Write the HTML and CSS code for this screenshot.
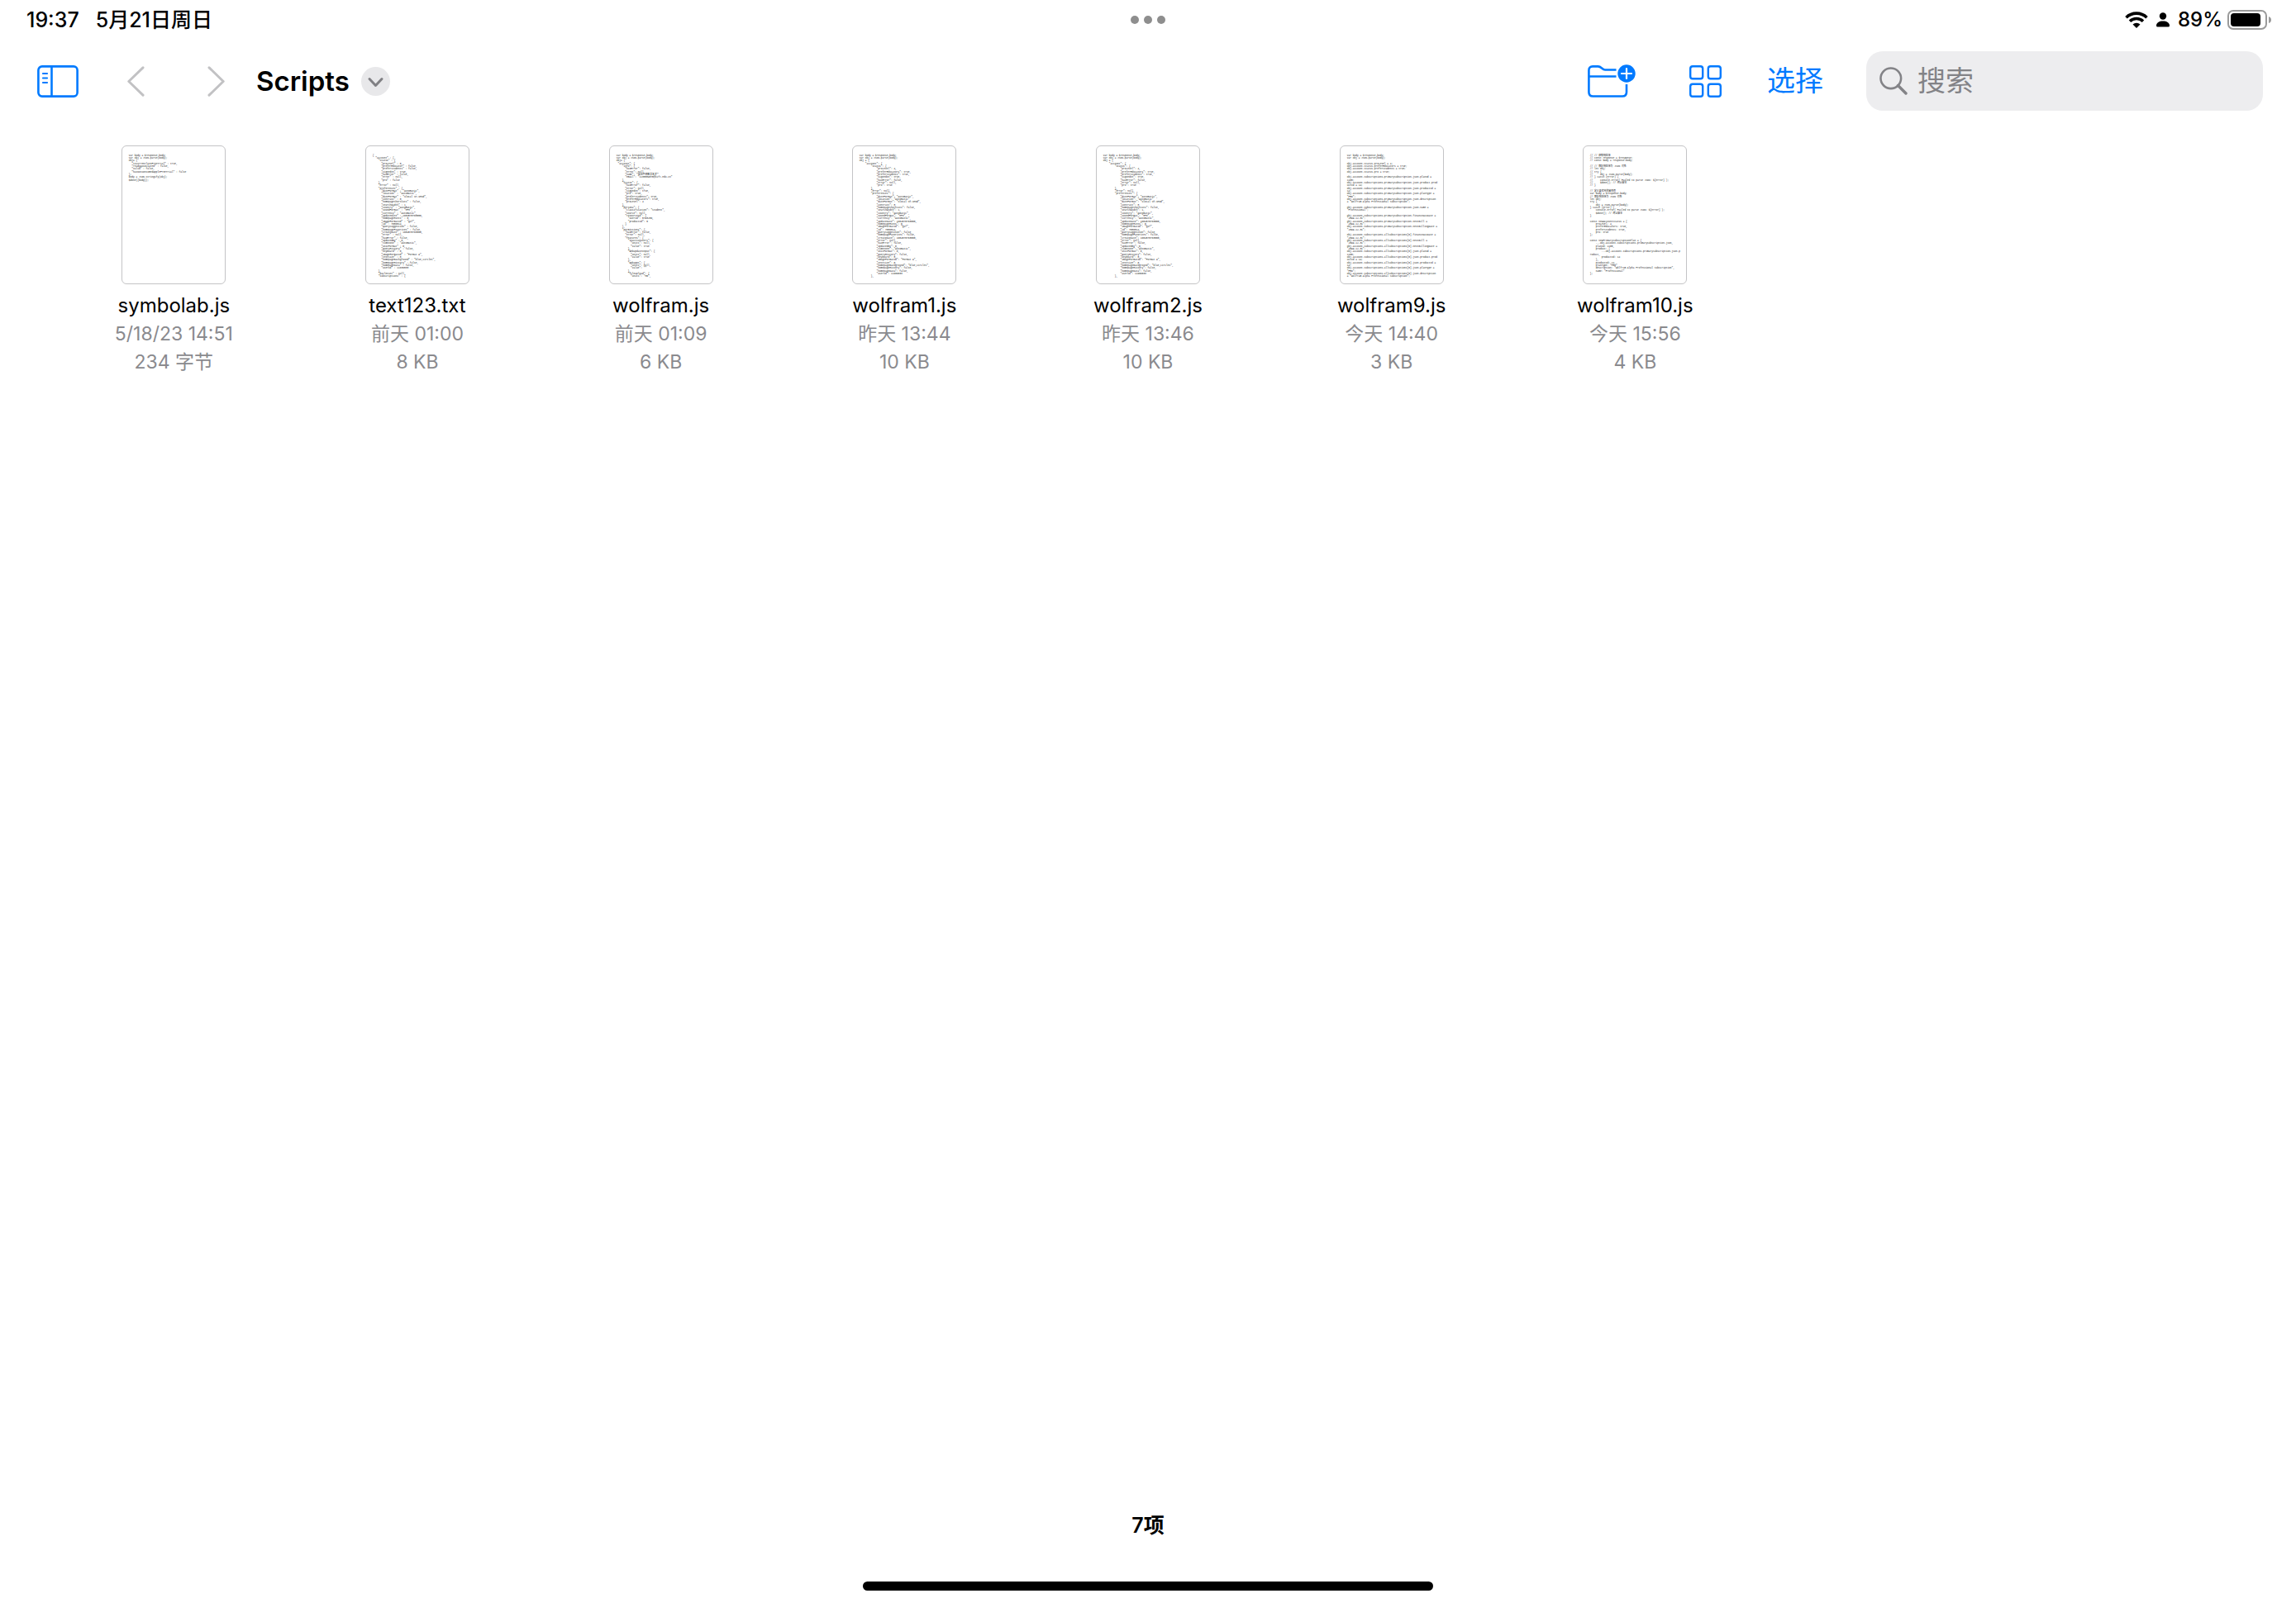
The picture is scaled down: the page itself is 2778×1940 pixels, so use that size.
FILE: index.html
```html
<!DOCTYPE html>
<html lang="zh-CN">
<head>
<meta charset="utf-8">
<meta name="viewport" content="width=device-width, initial-scale=1">
<title>Scripts</title>
<link rel="stylesheet" href="styles.css">
</head>
<body>
<div class="screen">
  <div class="status">
    <div class="status-side status-start">
      <span>19:37</span>
      <span>5月21日周日</span>
    </div>
    <button class="dots" type="button" aria-label="多任务"><i></i><i></i><i></i></button>
    <div class="status-side status-end">
      <svg class="wifi" viewBox="0 0 28 20" width="28" height="20" aria-hidden="true">
        <path d="M1.500 7.200A18 18 0 0 1 26.500 7.200" fill="none" stroke="#000" stroke-width="3.600"/>
        <path d="M6 11.800A11.500 11.500 0 0 1 22 11.800" fill="none" stroke="#000" stroke-width="3.600"/>
        <path d="M9.500 15.600A6.400 6.400 0 0 1 18.500 15.600L14 20Z"/>
      </svg>
      <svg class="person" viewBox="0 0 16 18" width="16" height="18" aria-hidden="true">
        <circle cx="8" cy="4.500" r="4.200"/>
        <path d="M0 16C0 12.500 3.500 10.500 8 10.500S16 12.500 16 16Q16 17.500 14.500 17.500H1.500Q0 17.500 0 16Z"/>
      </svg>
      <span>89%</span>
      <svg class="battery" viewBox="0 0 54 24" width="54" height="24" aria-hidden="true">
        <rect x="1" y="1" width="46" height="22" rx="6" fill="none" stroke="#9a9a9a" stroke-width="2"/>
        <rect x="4" y="4" width="36" height="16" rx="4"/>
        <path d="M50 8Q53 9 53 12T50 16Z" fill="#9a9a9a"/>
      </svg>
    </div>
  </div>

  <header class="toolbar">
    <button class="icon sidebar" type="button" aria-label="边栏">
      <svg viewBox="0 0 50 39" width="50" height="39">
        <rect x="1.400" y="1.400" width="47.200" height="36.200" rx="4.500"/>
        <path d="M17.500 1.400V37.600"/>
        <path d="M7 10H12M7 15.500H12M7 21H12" stroke-width="2.200" stroke-linecap="round"/>
      </svg>
    </button>
    <button class="icon back" type="button" aria-label="返回">
      <svg viewBox="0 0 21 37" width="21" height="37"><path d="M19 1.800L1.800 18.500L19 35.200"/></svg>
    </button>
    <button class="icon forward" type="button" aria-label="前进">
      <svg viewBox="0 0 21 37" width="21" height="37"><path d="M2 1.800L19.200 18.500L2 35.200"/></svg>
    </button>
    <h1 class="title">Scripts</h1>
    <button class="icon title-menu" type="button" aria-label="文件夹菜单">
      <svg viewBox="0 0 35 35" width="35" height="35"><path d="M10 14.500L17.500 22.500L25 14.500"/></svg>
    </button>
    <div class="actions">
      <button class="icon folder" type="button" aria-label="新建文件夹">
        <svg viewBox="0 0 58 40" width="58" height="40">
          <path d="M34.500 6.500H21C17.500 6.500 16.500 2.400 12.500 2.400H6Q1.400 2.400 1.400 7V33.500Q1.400 38.500 6.400 38.500H42Q47 38.500 47 33.500V24"/>
          <path d="M1.400 14.500H34.500"/>
          <circle cx="47" cy="11" r="10.700" fill="#007aff" stroke="none"/>
          <path d="M47 5V17M41 11H53" stroke="#fff" stroke-width="2.200" stroke-linecap="round"/>
        </svg>
      </button>
      <button class="icon grid-view" type="button" aria-label="显示方式">
        <svg viewBox="0 0 39 39" width="39" height="39">
          <rect x="1.200" y="1.200" width="15" height="15" rx="2.800"/>
          <rect x="22.800" y="1.200" width="15" height="15" rx="2.800"/>
          <rect x="1.200" y="22.800" width="15" height="15" rx="2.800"/>
          <rect x="22.800" y="22.800" width="15" height="15" rx="2.800"/>
        </svg>
      </button>
      <button class="select" type="button">选择</button>
      <label class="search">
        <svg viewBox="0 0 34 34" width="34" height="34" aria-hidden="true">
          <circle cx="13.800" cy="13.800" r="12.300"/>
          <path d="M22.500 22.500L32 32" stroke-width="3.400" stroke-linecap="round"/>
        </svg>
        <input type="search" placeholder="搜索" aria-label="搜索">
      </label>
    </div>
  </header>

  <main class="files">
    <a class="file" href="#symbolab.js">
      <svg class="thumb" viewBox="0 0 1116 1494" aria-hidden="true"><foreignObject width="1116" height="1494"><pre class="page">var body = $response.body;
var obj = JSON.parse(body);
obj= {
  "isCurrentlyInFreeTrial" : true,
  "readyAssociated" : false,
  "valid" : false,
  "hasNotConsumedAppleFreeTrial" : false
};
body = JSON.stringify(obj);
$done({body});</pre></foreignObject></svg>
      <span class="name">symbolab.js</span>
      <span class="meta">5/18/23 14:51</span>
      <span class="meta">234 字节</span>
    </a>
    <a class="file" href="#text123.txt">
      <svg class="thumb" viewBox="0 0 1116 1494" aria-hidden="true"><foreignObject width="1116" height="1494"><pre class="page">{
  "account" : {
    "status" : {
      "proLevel" : 0,
      "preferEducator" : false,
      "preferStudents" : false,
      "signedIn" : true,
      "hasError" : false,
      "error" : null,
      "pro" : false
    },
    "error" : null,
    "preferences" : {
      "dateFormat" : "Automatic",
      "location" : "Automatic",
      "dateFormat" : "%local %Y-%M%d",
      "contrast" : 0,
      "homepageShortcuts" : false,
      "searchWidth" : 1,
      "country" : "Automatic",
      "soundFormat" : "MP3",
      "currency" : "Automatic",
      "updateDate" : 1684570763000,
      "homepageHints" : 0,
      "imageFormatId" : "gif",
      "id" : 7086514,
      "querySuggestion" : false,
      "homepageFavorites" : false,
      "createDate" : 1684570763000,
      "error" : null,
      "hasError" : false,
      "updatedBy" : 0,
      "timezone" : "Automatic",
      "unitFormat" : 0,
      "queryHistory" : false,
      "keyboard" : 0,
      "imageFormatId" : "Format A",
      "textSize" : 0,
      "homepageBackground" : "blue,circles",
      "homepageHistory" : false,
      "homepageData" : false,
      "userId" : 11636533
    },
    "pacletSet" : null,
    "subscriptions" : {</pre></foreignObject></svg>
      <span class="name">text123.txt</span>
      <span class="meta">前天 01:00</span>
      <span class="meta">8 KB</span>
    </a>
    <a class="file" href="#wolfram.js">
      <svg class="thumb" viewBox="0 0 1116 1494" aria-hidden="true"><foreignObject width="1116" height="1494"><pre class="page">var body = $response.body;
var obj = JSON.parse(body);
obj= {
 "account": {
    "info": {
      "hasError": false,
      "error": null,
      "name": "英国牛顿数学艺术",
      "email": "1138889878@kirt.edu.cn"
    },
    "status": {
      "hasError": false,
      "error": null,
      "signedIn": true,
      "pro": true,
      "preferStudents": true,
      "preferEducators": true,
      "proLevel": 4
    },
    "persona": {
      "classification": "Student",
      "source": null,
      "resourceId": {
        "userId": 5793256,
        "productId": 5
      }
    },
    "permissions": {
      "hasError": false,
      "error": null,
      "features": {
        "InactiveUsers": {
          "units": null,
          "value": true
        },
        "WebUpdateInput": {
          "units": null,
          "value": true
        },
        "webapps": {
          "units": null,
          "value": ""
        },
        "fileUpload": {
          "units": "MB",</pre></foreignObject></svg>
      <span class="name">wolfram.js</span>
      <span class="meta">前天 01:09</span>
      <span class="meta">6 KB</span>
    </a>
    <a class="file" href="#wolfram1.js">
      <svg class="thumb" viewBox="0 0 1116 1494" aria-hidden="true"><foreignObject width="1116" height="1494"><pre class="page">var body = $response.body;
var obj = JSON.parse(body);
obj = {
    "account": {
        "status": {
            "proLevel": 4,
            "preferEducators": true,
            "preferStudents": true,
            "signedIn": true,
            "hasError": false,
            "error": null,
            "pro": true
        },
        "error": null,
        "preferences": {
            "dateFormat": "Automatic",
            "location": "Automatic",
            "dateFormat": "%local %Y-%M%d",
            "contrast": 0,
            "homepageShortcuts": false,
            "searchWidth": 1,
            "country": "Automatic",
            "soundFormat": "MP3",
            "currency": "Automatic",
            "updateDate": 1684570763000,
            "homepageHints": 0,
            "imageFormatId": "gif",
            "id": 7086514,
            "querySuggestion": false,
            "homepageFavorites": false,
            "createDate": 1684570763000,
            "error": null,
            "hasError": false,
            "updatedBy": 0,
            "timezone": "Automatic",
            "unitFormat": 0,
            "queryHistory": false,
            "keyboard": 0,
            "imageFormatId": "Format A",
            "textSize": 0,
            "homepageBackground": "blue,circles",
            "homepageHistory": false,
            "homepageData": false,
            "userId": 11636533
        },</pre></foreignObject></svg>
      <span class="name">wolfram1.js</span>
      <span class="meta">昨天 13:44</span>
      <span class="meta">10 KB</span>
    </a>
    <a class="file" href="#wolfram2.js">
      <svg class="thumb" viewBox="0 0 1116 1494" aria-hidden="true"><foreignObject width="1116" height="1494"><pre class="page">var body = $response.body;
var obj = JSON.parse(body);
obj = {
    "account": {
        "status": {
            "proLevel": 4,
            "preferEducators": true,
            "preferStudents": true,
            "signedIn": true,
            "hasError": false,
            "error": null,
            "pro": true
        },
        "error": null,
        "preferences": {
            "dateFormat": "Automatic",
            "location": "Automatic",
            "dateFormat": "%local %Y-%M%d",
            "contrast": 0,
            "homepageShortcuts": false,
            "searchWidth": 1,
            "country": "Automatic",
            "soundFormat": "MP3",
            "currency": "Automatic",
            "updateDate": 1684570763000,
            "homepageHints": 0,
            "imageFormatId": "gif",
            "id": 7086514,
            "querySuggestion": false,
            "homepageFavorites": false,
            "createDate": 1684570763000,
            "error": null,
            "hasError": false,
            "updatedBy": 0,
            "timezone": "Automatic",
            "unitFormat": 0,
            "queryHistory": false,
            "keyboard": 0,
            "imageFormatId": "Format A",
            "textSize": 0,
            "homepageBackground": "blue,circles",
            "homepageHistory": false,
            "homepageData": false,
            "userId": 11636533
        },</pre></foreignObject></svg>
      <span class="name">wolfram2.js</span>
      <span class="meta">昨天 13:46</span>
      <span class="meta">10 KB</span>
    </a>
    <a class="file" href="#wolfram9.js">
      <svg class="thumb" viewBox="0 0 1116 1494" aria-hidden="true"><foreignObject width="1116" height="1494"><pre class="page">var body = $response.body;
var obj = JSON.parse(body);

obj.account.status.proLevel = 4;
obj.account.status.preferEducators = true;
obj.account.status.preferStudents = true;
obj.account.status.pro = true;

obj.account.subscriptions.primarySubscription.json.planId =
1105;
obj.account.subscriptions.primarySubscription.json.product.prod
uctId = 14;
obj.account.subscriptions.primarySubscription.json.productId =
14;
obj.account.subscriptions.primarySubscription.json.planType =
"PRO";
obj.account.subscriptions.primarySubscription.json.description
= "Wolfram Alpha Professional Subscription";

obj.account.subscriptions.primarySubscription.json.name =
"Professional";

obj.account.subscriptions.primarySubscription.financeAccDate =
"2099-12-31";
obj.account.subscriptions.primarySubscription.nextBill =
"2099-12-31";
obj.account.subscriptions.primarySubscription.nextBillingDate =
"2099-12-31";

obj.account.subscriptions.allSubscriptions[0].financeAccDate =
"2099-12-31";
obj.account.subscriptions.allSubscriptions[0].nextBill =
"2099-12-31";
obj.account.subscriptions.allSubscriptions[0].nextBillingDate =
"2099-12-31";
obj.account.subscriptions.allSubscriptions[0].json.planId =
1105;
obj.account.subscriptions.allSubscriptions[0].json.product.prod
uctId = 14;
obj.account.subscriptions.allSubscriptions[0].json.productId =
14;
obj.account.subscriptions.allSubscriptions[0].json.planType =
"PRO";
obj.account.subscriptions.allSubscriptions[0].json.description
= "Wolfram Alpha Professional Subscription";</pre></foreignObject></svg>
      <span class="name">wolfram9.js</span>
      <span class="meta">今天 14:40</span>
      <span class="meta">3 KB</span>
    </a>
    <a class="file" href="#wolfram10.js">
      <svg class="thumb" viewBox="0 0 1116 1494" aria-hidden="true"><foreignObject width="1116" height="1494"><pre class="page">// // 获取响应体
// const response = $response;
// const body = response.body;

// // 解析响应体为 JSON 对象
// let obj;
// try {
//     obj = JSON.parse(body);
// } catch (error) {
//     console.error(`Failed to parse JSON: ${error}`);
//     $done(); // 终止脚本
// }

// 定义要修改的属性值
var body = $response.body;
// 解析响应体为 JSON 对象
let obj;
try {
    obj = JSON.parse(body);
} catch (error) {
    console.error(`Failed to parse JSON: ${error}`);
    $done(); // 终止脚本
}

const newAccountStatus = {
    proLevel: 4,
    preferEducators: true,
    preferStudents: true,
    pro: true
};

const newPrimarySubscriptionPlan = {
    ...obj.account.subscriptions.primarySubscription.json,
    planId: 1105,
    product: {
        ...obj.account.subscriptions.primarySubscription.json.p
roduct,
        productId: 14
    },
    productId: 14,
    planType: "PRO",
    description: "Wolfram Alpha Professional Subscription",
    name: "Professional"
};</pre></foreignObject></svg>
      <span class="name">wolfram10.js</span>
      <span class="meta">今天 15:56</span>
      <span class="meta">4 KB</span>
    </a>
  </main>

  <footer class="footer">
    <p class="count">7项</p>
    <div class="home-bar"></div>
  </footer>
</div>
</body>
</html>
```
FILE: styles.css
```css
* {
  box-sizing: border-box;
}

body {
  margin: 0;
  background: #fff;
  color: #000;
  font-family: Inter, "Noto Sans CJK SC", sans-serif;
}

button,
input {
  margin: 0;
  padding: 0;
  border: 0;
  background: none;
  font: inherit;
}

svg {
  display: block;
}

.screen {
  display: flex;
  flex-direction: column;
  min-height: 100vh;
}

/* Status bar */

.status {
  display: grid;
  grid-template-columns: 1fr auto 1fr;
  align-items: center;
  height: 48px;
  padding: 0 29px;
  font-size: 25px;
  font-weight: 500;
  line-height: 48px;
}

.status-side {
  display: flex;
  align-items: center;
  gap: 20px;
}

.status-start {
  padding-left: 3px;
}

.status-end {
  justify-content: flex-end;
  gap: 10px;
}

.status-end span {
  font-size: 24px;
}

.status-end .battery {
  margin-left: -4px;
}

.dots {
  display: flex;
  gap: 6px;
}

.dots i {
  width: 10px;
  height: 10px;
  border-radius: 50%;
  background: #8e8e8e;
}

/* Toolbar */

.toolbar {
  display: flex;
  align-items: center;
  height: 100px;
  padding: 0 40px 0 45px;
}

.icon svg {
  fill: none;
  stroke: #007aff;
  stroke-width: 2.6;
}

.back {
  margin-left: 59px;
}

.forward {
  margin-left: 76px;
}

.back svg,
.forward svg {
  stroke: #c2c2c4;
  stroke-width: 3;
  stroke-linecap: round;
  stroke-linejoin: round;
}

.title {
  margin: 0 14px 0 38px;
  font-size: 33px;
  font-weight: 600;
  line-height: 40px;
}

.title-menu {
  border-radius: 50%;
  background: #e8e8ea;
}

.title-menu svg {
  stroke: #808084;
  stroke-width: 3;
  stroke-linecap: round;
  stroke-linejoin: round;
}

.actions {
  display: flex;
  align-items: center;
  margin-left: auto;
}

.grid-view {
  margin-left: 65px;
}

.grid-view svg {
  stroke-width: 2.4;
}

.select {
  margin: 0 52px 0 55px;
  color: #007aff;
  font-size: 34px;
  line-height: 48px;
}

.search {
  display: flex;
  align-items: center;
  gap: 12px;
  width: 480px;
  height: 72px;
  padding: 0 16px;
  border-radius: 20px;
  background: #ededef;
}

.search svg {
  flex: none;
  fill: none;
  stroke: #838387;
  stroke-width: 2.6;
}

.search input {
  flex: 1;
  min-width: 0;
  font-size: 34px;
  line-height: 48px;
  outline: 0;
}

.search input::placeholder {
  color: #838387;
}

/* File grid */

.files {
  display: grid;
  flex: 1;
  grid-template-columns: repeat(9, 1fr);
  align-content: start;
  padding: 28px 63px 0;
}

.file {
  display: flex;
  flex-direction: column;
  align-items: center;
  color: inherit;
  text-decoration: none;
}

.thumb {
  width: 126px;
  height: 168px;
  border: 1px solid #c4c4c6;
  border-radius: 6px;
}

/* Preview text is set in the thumbnail's own units, nine to a pixel */
.page {
  margin: 0;
  padding: 84px 70px 0;
  color: #222;
  font-family: "Liberation Mono", "Noto Sans CJK SC", monospace;
  font-size: 26px;
  line-height: 30px;
}

.name {
  margin-top: 9px;
  font-size: 24px;
  line-height: 34px;
}

.meta {
  color: #8a8a8e;
  font-size: 23px;
  line-height: 34px;
}

/* Footer */

.footer {
  display: flex;
  flex-direction: column;
  align-items: center;
  gap: 50px;
  padding-bottom: 15px;
}

.count {
  margin: 0;
  font-size: 25px;
  font-weight: 600;
  line-height: 36px;
}

.home-bar {
  width: 690px;
  max-width: 60%;
  height: 11px;
  border-radius: 6px;
  background: #000;
}
```
